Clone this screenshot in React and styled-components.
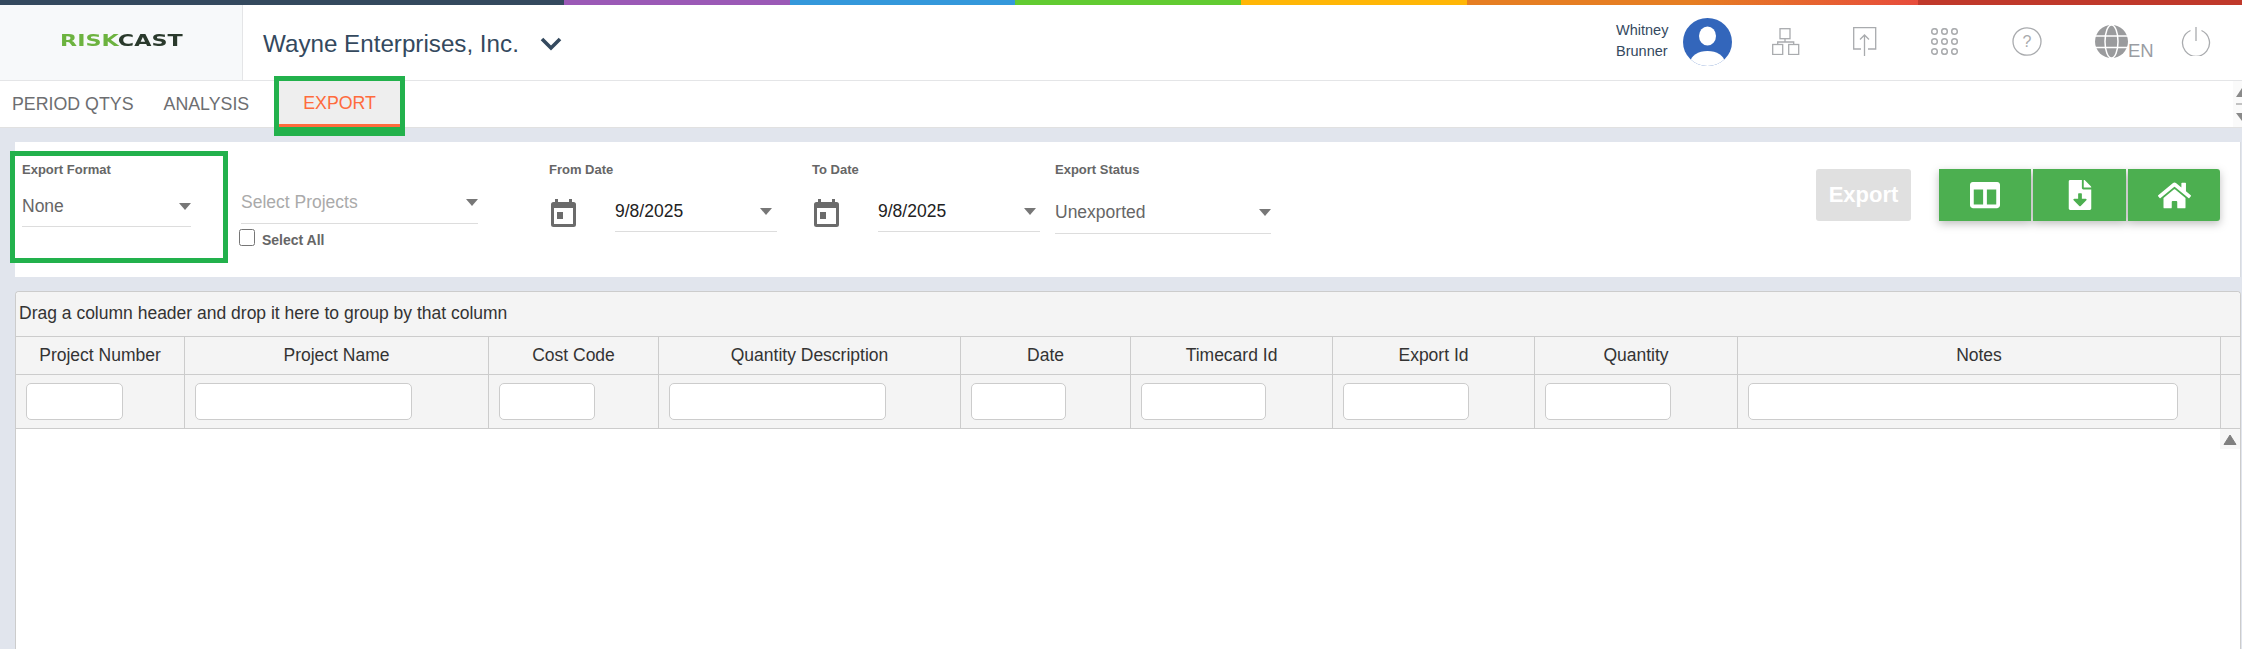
import React from 'react';
import styled, { createGlobalStyle } from 'styled-components';
import { FaColumns, FaFileDownload, FaHome } from 'react-icons/fa';

const GlobalStyle = createGlobalStyle`
    html, body {
        margin: 0;
        padding: 0;
        background: #e1e5ed;
        font-family: "Liberation Sans", Arial, sans-serif;
    }
`

const Shell = styled.div`
    width: 2242px;
    height: 649px;
    display: flex;
    flex-direction: column;
    overflow: hidden;
    position: relative;
`

const ColorLine = styled.div`
    flex: none;
    height: 5px;
    background: linear-gradient(to right, #34495e 0, #34495e 564px, #9b59b6 564px, #9b59b6 790px, #3498db 790px, #3498db 1015px, #62cb31 1015px, #62cb31 1241px, #ffb606 1241px, #ffb606 1467px, #e67e22 1467px, #e67e22 1692px, #e74c3c 1918px, #c0392b 1918px, #c0392b 2242px);
`

const Header = styled.header`
    flex: none;
    height: 75px;
    display: flex;
    align-items: center;
    background: #fff;
    border-bottom: 1px solid #e4e5e7;
`

const LogoBox = styled.div`
    width: 242px;
    height: 100%;
    flex: none;
    display: flex;
    align-items: center;
    justify-content: center;
    background: #f7f9fa;
    border-right: 1px solid #e4e5e7;
`

const Logo = styled.div`
    font-family: "DejaVu Sans", sans-serif;
    font-weight: 700;
    font-size: 16.5px;
    color: #2a3a2c;
    transform: scaleX(1.35);
    margin-bottom: 4px;
    span { color: #6cb33f; }
`

const Company = styled.div`
    margin-left: 20px;
    display: flex;
    align-items: center;
    gap: 21px;
    font-size: 24.2px;
    color: #34495e;
    padding-top: 3px;
`

const Tools = styled.div`
    margin-left: auto;
    margin-right: 31px;
    display: flex;
    align-items: center;
`

const UserName = styled.div`
    font-size: 14.5px;
    line-height: 21px;
    color: #34495e;
    width: 67px;
    padding-bottom: 3px;
`

const Avatar = styled.svg`
    width: 49px;
    height: 48px;
    margin-right: 40px;
    margin-bottom: 2px;
`

const ToolSlot = styled.div`
    width: ${p => p.$w}px;
    display: flex;
    align-items: flex-end;
    margin-bottom: 2px;
`

const Lang = styled.span`
    font-size: 18.5px;
    line-height: 18px;
    color: #9a9da3;
    margin-bottom: -2px;
`

const TabBar = styled.nav`
    flex: none;
    height: 46px;
    display: flex;
    align-items: stretch;
    gap: 30px;
    padding-left: 12px;
    background: #fff;
    border-bottom: 1px solid #e1e1e1;
`

const Tab = styled.div`
    display: flex;
    align-items: center;
    font-size: 17.8px;
    color: #6d6e71;
    padding-top: 1px;
    ${p => p.$active && `
        padding: 1px 24px 0;
        color: #ff6b3d;
        background: #eeeeee;
        border-bottom: 3px solid #ff6b3d;
        box-shadow: 0 0 0 5px #22b14c, 0 4px 0 5px #22b14c;
    `}
`

const SplitterHandle = styled.svg`
    position: absolute;
    right: 0;
    top: 81px;
    width: 9px;
    height: 46px;
    background: #fafafa;
`

const Content = styled.main`
    flex: 1;
    min-height: 0;
    display: flex;
    flex-direction: column;
    gap: 14px;
    padding: 14px 1px 0 15px;
`

const Panel = styled.section`
    flex: none;
    height: 121px;
    padding-top: 14px;
    padding-right: 20px;
    display: flex;
    align-items: flex-start;
    background: #fff;
    border-right: 1px solid #d8dbe0;
`

const Field = styled.div`
    width: ${p => p.$w}px;
    margin-left: ${p => p.$ml || 0}px;
    flex: none;
    padding-top: 6px;
`

const FormatField = styled(Field)`
    height: 96px;
    padding-left: 7px;
    width: 201px;
    outline: 5px solid #22b14c;
`

const Label = styled.label`
    display: block;
    font-size: 13px;
    line-height: 16px;
    font-weight: 700;
    color: #666;
`

const Dropdown = styled.div`
    width: ${p => p.$w ? p.$w + 'px' : 'auto'};
    height: ${p => p.$h || 36}px;
    margin-top: ${p => p.$mt || 0}px;
    display: flex;
    align-items: center;
    justify-content: space-between;
    font-size: 17.5px;
    color: ${p => p.$color || '#666'};
    border-bottom: 1px solid #ddd;
    padding-bottom: 4px;
    box-sizing: border-box;
`

const Caret = styled.i`
    width: 0;
    height: 0;
    flex: none;
    border-left: 6px solid transparent;
    border-right: 6px solid transparent;
    border-top: 7px solid #777;
    margin-right: ${p => p.$mr || 0}px;
`

const DateRow = styled.div`
    display: flex;
    align-items: flex-start;
    margin-top: 17px;
`

const CalendarIcon = styled.svg`
    width: 25px;
    height: 28px;
    flex: none;
    margin: 4px 39px 0 2px;
`

const CheckRow = styled.div`
    display: flex;
    align-items: center;
    gap: 7px;
    margin-top: 8px;
    margin-left: -2px;
    font-size: 14px;
    font-weight: 700;
    color: #666;
`

const CheckBox = styled.span`
    width: 14px;
    height: 15px;
    border: 1px solid #767676;
    border-radius: 2.5px;
    margin-top: -5px;
    background: #fff;
`

const Actions = styled.div`
    margin-left: auto;
    margin-top: 13px;
    display: flex;
    gap: 28px;
`

const ExportButton = styled.button`
    width: 95px;
    height: 52px;
    border: 0;
    border-radius: 3px;
    padding: 0;
    background: #e0e0e0;
    color: #fff;
    font-family: inherit;
    font-size: 22px;
    font-weight: 700;
`

const ButtonGroup = styled.div`
    display: flex;
    gap: 2px;
    filter: drop-shadow(0 3px 4px rgba(0, 0, 0, 0.25));
`

const GreenButton = styled.button`
    width: ${p => p.$w}px;
    height: 52px;
    border: 0;
    padding: 0;
    display: flex;
    align-items: center;
    justify-content: center;
    background: #4caf50;
    color: #fff;
    border-radius: ${p => p.$last ? '0 3px 3px 0' : '0'};
`

const Grid = styled.section`
    flex: 1;
    min-height: 0;
    display: flex;
    flex-direction: column;
    background: #fff;
    border: 1px solid #ccc;
    border-bottom: 0;
    border-radius: 4px 4px 0 0;
    position: relative;
`

const GroupBar = styled.div`
    flex: none;
    height: 44px;
    display: flex;
    align-items: center;
    padding-left: 3px;
    font-size: 17.5px;
    color: #333;
    background: #f4f4f4;
    border-bottom: 1px solid #ccc;
    border-radius: 4px 4px 0 0;
    padding-bottom: 1px;
    box-sizing: border-box;
    height: 45px;
`

const Row = styled.div`
    flex: none;
    display: grid;
    grid-template-columns: 169px 304px 170px 302px 170px 202px 202px 203px 483px 1fr;
    height: ${p => p.$h}px;
    background: #f4f4f4;
    border-bottom: 1px solid #ccc;
`

const HeadCell = styled.div`
    display: flex;
    align-items: center;
    justify-content: center;
    font-size: 17.5px;
    color: #333;
    border-right: 1px solid #ccc;
    &:last-child { border-right: 0; }
`

const FilterCell = styled.div`
    display: flex;
    align-items: center;
    padding-left: 10px;
    border-right: 1px solid #ccc;
    &:last-child { border-right: 0; }
`

const FilterInput = styled.input`
    width: ${p => p.$w}px;
    height: 37px;
    box-sizing: border-box;
    background: #fff;
    border: 1px solid #ccc;
    border-radius: 5px;
    padding: 0 6px;
    margin-bottom: 1px;
`

const ScrollArrow = styled.div`
    position: absolute;
    right: 0;
    top: 137px;
    width: 20px;
    height: 20px;
    display: flex;
    align-items: flex-end;
    justify-content: center;
    background: #f7f7f7;
    padding-bottom: 3px;
    box-sizing: border-box;
`

const columns = [
    { title: 'Project Number', input: 97 },
    { title: 'Project Name', input: 217 },
    { title: 'Cost Code', input: 96 },
    { title: 'Quantity Description', input: 217 },
    { title: 'Date', input: 95 },
    { title: 'Timecard Id', input: 125 },
    { title: 'Export Id', input: 126 },
    { title: 'Quantity', input: 126 },
    { title: 'Notes', input: 430 },
]

function Calendar() {
    return (
        <CalendarIcon viewBox='0 0 25 28'>
            <path fill='#6b6b6b' d='M4 0h3v3h11V0h3v3h1.5A2.5 2.5 0 0 1 25 5.5v20a2.5 2.5 0 0 1-2.5 2.5h-20A2.5 2.5 0 0 1 0 25.500v-20A2.500 2.500 0 0 1 2.500 3H4z'/>
            <rect x='3' y='9' width='19' height='16' fill='#fff'/>
            <rect x='6' y='13' width='6' height='7' fill='#6b6b6b'/>
        </CalendarIcon>
    )
}

function App() {
    return (
        <Shell>
            <GlobalStyle />
            <ColorLine />
            <Header>
                <LogoBox>
                    <Logo><span>RISK</span>CAST</Logo>
                </LogoBox>
                <Company>
                    Wayne Enterprises, Inc.
                    <svg width='22' height='14' viewBox='0 0 22 14'>
                        <polyline points='2,2 11,11 20,2' fill='none' stroke='#34495e' strokeWidth='3.6'/>
                    </svg>
                </Company>
                <Tools>
                    <UserName>Whitney<br/>Brunner</UserName>
                    <Avatar viewBox='0 0 49 48'>
                        <defs>
                            <clipPath id='avatarClip'><ellipse cx='24.500' cy='24' rx='24.500' ry='24'/></clipPath>
                        </defs>
                        <ellipse cx='24.500' cy='24' rx='24.500' ry='24' fill='#3366bb'/>
                        <ellipse cx='24.500' cy='18' rx='8.500' ry='9.500' fill='#fff'/>
                        <ellipse cx='24.500' cy='44' rx='17' ry='11' fill='#fff' clipPath='url(#avatarClip)'/>
                    </Avatar>
                    <ToolSlot $w={81}>
                        <svg width='28' height='27' viewBox='0 0 28 27' fill='none' stroke='#a9abae' strokeWidth='1.300'>
                            <rect x='8' y='.7' width='10' height='10'/>
                            <rect x='.7' y='16.500' width='10' height='10'/>
                            <rect x='16.700' y='16.500' width='10' height='10'/>
                            <path d='M13 11v3M5.700 16.500V14h16v2.500'/>
                        </svg>
                    </ToolSlot>
                    <ToolSlot $w={78}>
                        <svg width='24' height='29' viewBox='0 0 24 29' fill='none' stroke='#a9abae' strokeWidth='1.300'>
                            <path d='M8 22H.7V.7h22V22H15'/>
                            <path d='M11.500 29V8M7 12.500l4.500-4.500 4.500 4.500'/>
                        </svg>
                    </ToolSlot>
                    <ToolSlot $w={81}>
                        <svg width='27' height='27' viewBox='0 0 27 27' fill='none' stroke='#a9abae' strokeWidth='1.500'>
                            {[3.500, 13.500, 23.500].map(y => [3.500, 13.500, 23.500].map(x => (
                                <circle key={x + '-' + y} cx={x} cy={y} r='2.800'/>
                            )))}
                        </svg>
                    </ToolSlot>
                    <ToolSlot $w={83}>
                        <svg width='30' height='29' viewBox='0 0 30 29'>
                            <ellipse cx='15' cy='14.500' rx='14' ry='13.700' fill='none' stroke='#a9abae' strokeWidth='1.300'/>
                            <text x='15' y='20' textAnchor='middle' fontSize='16' fill='#a9abae' fontFamily='Liberation Sans'>?</text>
                        </svg>
                    </ToolSlot>
                    <ToolSlot $w={86}>
                        <svg width='33' height='33' viewBox='0 0 33 33'>
                            <circle cx='16.500' cy='16.500' r='16.500' fill='#9a9b9d'/>
                            <g fill='none' stroke='#fff' strokeWidth='1.500'>
                                <ellipse cx='16.500' cy='16.500' rx='6.500' ry='16.500'/>
                                <path d='M0 11h33M0 22.500h33'/>
                            </g>
                        </svg>
                        <Lang>EN</Lang>
                    </ToolSlot>
                    <ToolSlot $w={30}>
                        <svg width='30' height='29' viewBox='0 0 30 29' fill='none' stroke='#a9abae' strokeWidth='1.300'>
                            <path d='M9.500 3.500a13.500 13.500 0 1 0 11 0M15 0v14'/>
                        </svg>
                    </ToolSlot>
                </Tools>
            </Header>
            <TabBar>
                <Tab>PERIOD QTYS</Tab>
                <Tab>ANALYSIS</Tab>
                <Tab $active>EXPORT</Tab>
            </TabBar>
            <SplitterHandle viewBox='0 0 9 46'>
                <path d='M9 7v9H3z' fill='#8a8a8a'/>
                <path d='M3 23h6' stroke='#8a8a8a'/>
                <path d='M3 32h6v8z' fill='#8a8a8a'/>
            </SplitterHandle>
            <Content>
                <Panel>
                    <FormatField>
                        <Label>Export Format</Label>
                        <Dropdown $w={169} $h={37} $mt={12}>None<Caret /></Dropdown>
                    </FormatField>
                    <Field $w={237} $ml={18}>
                        <Dropdown $color='#aaa' $h={38} $mt={24}>Select Projects<Caret /></Dropdown>
                        <CheckRow><CheckBox />Select All</CheckRow>
                    </Field>
                    <Field $w={228} $ml={71}>
                        <Label>From Date</Label>
                        <DateRow>
                            <Calendar />
                            <Dropdown $w={162} $color='#222' $h={37}>9/8/2025<Caret $mr={5} /></Dropdown>
                        </DateRow>
                    </Field>
                    <Field $w={228} $ml={35}>
                        <Label>To Date</Label>
                        <DateRow>
                            <Calendar />
                            <Dropdown $w={162} $color='#222' $h={37}>9/8/2025<Caret $mr={4} /></Dropdown>
                        </DateRow>
                    </Field>
                    <Field $w={216} $ml={15}>
                        <Label>Export Status</Label>
                        <Dropdown $h={38} $mt={18}>Unexported<Caret /></Dropdown>
                    </Field>
                    <Actions>
                        <ExportButton>Export</ExportButton>
                        <ButtonGroup>
                            <GreenButton $w={92}><FaColumns size={30} /></GreenButton>
                            <GreenButton $w={93}><FaFileDownload size={30} /></GreenButton>
                            <GreenButton $w={92} $last><FaHome size={33} /></GreenButton>
                        </ButtonGroup>
                    </Actions>
                </Panel>
                <Grid>
                    <GroupBar>Drag a column header and drop it here to group by that column</GroupBar>
                    <Row $h={37}>
                        {columns.map(col => <HeadCell key={col.title}>{col.title}</HeadCell>)}
                        <HeadCell />
                    </Row>
                    <Row $h={53}>
                        {columns.map(col => (
                            <FilterCell key={col.title}><FilterInput $w={col.input} /></FilterCell>
                        ))}
                        <FilterCell />
                    </Row>
                    <ScrollArrow>
                        <svg width='14' height='12' viewBox='0 0 14 12'>
                            <path d='M7 1 13 10.500H1z' fill='#808080' stroke='#808080' strokeLinejoin='round'/>
                        </svg>
                    </ScrollArrow>
                </Grid>
            </Content>
        </Shell>
    )
}

export default App;
